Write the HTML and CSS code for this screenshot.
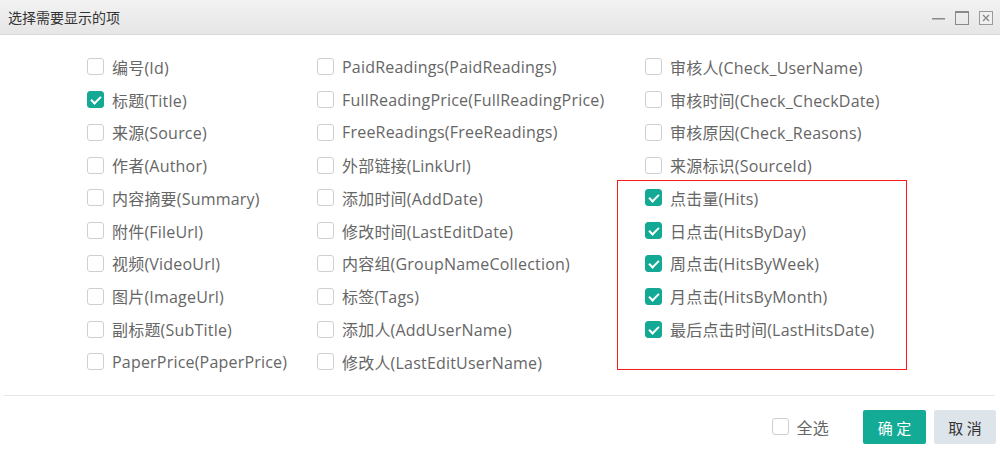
FILE: index.html
```html
<!DOCTYPE html>
<html lang="zh">
<head>
<meta charset="utf-8">
<link rel="stylesheet" href="styles.css">
</head>
<body>
<div class="dialog">
  <div class="titlebar">
    <span class="title">选择需要显示的项</span>
    <div class="tools">
      <svg class="tool" width="14" height="16" viewBox="0 0 14 16"><rect x="0" y="8" width="13" height="1.5" fill="#8a8a8a"/></svg>
      <svg class="tool" width="15" height="16" viewBox="0 0 15 16"><rect x="0.5" y="1.5" width="13" height="13" fill="none" stroke="#8a8a8a" stroke-width="1"/><rect x="0.5" y="1" width="13" height="2" fill="#8a8a8a"/></svg>
      <svg class="tool" width="15" height="16" viewBox="0 0 15 16"><rect x="0.5" y="1.5" width="13" height="13" fill="#f0f0f0" stroke="#9a9a9a" stroke-width="1"/><path d="M4 5 L10 11 M10 5 L4 11" stroke="#8a8a8a" stroke-width="1.4"/></svg>
    </div>
  </div>
  <div class="body">
    <div class="grid">
      <div class="col c1">
        <label class="item"><span class="box"></span>编号(Id)</label>
        <label class="item"><span class="box on"></span>标题(Title)</label>
        <label class="item"><span class="box"></span>来源(Source)</label>
        <label class="item"><span class="box"></span>作者(Author)</label>
        <label class="item"><span class="box"></span>内容摘要(Summary)</label>
        <label class="item"><span class="box"></span>附件(FileUrl)</label>
        <label class="item"><span class="box"></span>视频(VideoUrl)</label>
        <label class="item"><span class="box"></span>图片(ImageUrl)</label>
        <label class="item"><span class="box"></span>副标题(SubTitle)</label>
        <label class="item"><span class="box"></span>PaperPrice(PaperPrice)</label>
      </div>
      <div class="col c2">
        <label class="item"><span class="box"></span>PaidReadings(PaidReadings)</label>
        <label class="item"><span class="box"></span>FullReadingPrice(FullReadingPrice)</label>
        <label class="item"><span class="box"></span>FreeReadings(FreeReadings)</label>
        <label class="item"><span class="box"></span>外部链接(LinkUrl)</label>
        <label class="item"><span class="box"></span>添加时间(AddDate)</label>
        <label class="item"><span class="box"></span>修改时间(LastEditDate)</label>
        <label class="item"><span class="box"></span>内容组(GroupNameCollection)</label>
        <label class="item"><span class="box"></span>标签(Tags)</label>
        <label class="item"><span class="box"></span>添加人(AddUserName)</label>
        <label class="item"><span class="box"></span>修改人(LastEditUserName)</label>
      </div>
      <div class="col c3">
        <label class="item"><span class="box"></span>审核人(Check_UserName)</label>
        <label class="item"><span class="box"></span>审核时间(Check_CheckDate)</label>
        <label class="item"><span class="box"></span>审核原因(Check_Reasons)</label>
        <label class="item"><span class="box"></span>来源标识(SourceId)</label>
        <label class="item"><span class="box on"></span>点击量(Hits)</label>
        <label class="item"><span class="box on"></span>日点击(HitsByDay)</label>
        <label class="item"><span class="box on"></span>周点击(HitsByWeek)</label>
        <label class="item"><span class="box on"></span>月点击(HitsByMonth)</label>
        <label class="item"><span class="box on"></span>最后点击时间(LastHitsDate)</label>
        <div class="highlight"></div>
      </div>
    </div>
  </div>
  <div class="footer">
    <label class="item all"><span class="box"></span>全选</label>
    <button class="btn ok">确 定</button>
    <button class="btn cancel">取 消</button>
  </div>
</div>
</body>
</html>
```

FILE: styles.css
```css
* { box-sizing: border-box; }
html, body { margin: 0; padding: 0; background: #fff; }
body {
  width: 1000px;
  height: 459px;
  overflow: hidden;
  font-family: "Open Sans", "Noto Sans CJK SC", sans-serif;
  color: #666;
}
.titlebar {
  height: 35px;
  background: linear-gradient(#f2f2f2, #e6e6e6);
  border-bottom: 1px solid #d9d9d9;
  display: flex;
  align-items: center;
  justify-content: space-between;
  padding: 0 6px 0 8px;
}
.title {
  font-family: "Noto Sans CJK SC", sans-serif;
  font-size: 14px;
  color: #333;
}
.tools { display: flex; gap: 9px; align-items: center; padding-top: 1px; }
.tool { display: block; }
.body {
  padding: 15.5px 0 0 83px;
  height: 361px;
  border-bottom: 1px solid #e6e6e6;
  margin: 0 5px 0 4px;
}
.grid { display: grid; grid-template-columns: 230px 328px 1fr; }
.col { display: flex; flex-direction: column; position: relative; }
.item {
  height: 32.78px;
  display: flex;
  align-items: center;
  font-size: 16px;
  letter-spacing: 0.2px;
  color: #666;
  white-space: nowrap;
}
.box {
  width: 17px;
  height: 17px;
  border: 1px solid #cfcfcf;
  border-radius: 3px;
  margin-right: 8px;
  flex: none;
  background: #fff;
  position: relative;
}
.box.on {
  background: #14a994;
  border-color: #14a994;
}
.box.on::after {
  content: "";
  position: absolute;
  left: 5px;
  top: 2px;
  width: 4px;
  height: 8px;
  border: solid #fff;
  border-width: 0 2px 2px 0;
  transform: rotate(45deg);
}
.highlight {
  position: absolute;
  left: -28px;
  top: 129.5px;
  width: 290px;
  height: 190px;
  border: 1px solid #ff1a1a;
  pointer-events: none;
}
.footer {
  display: flex;
  justify-content: flex-end;
  align-items: center;
  padding: 14px 4px 0 0;
}
.all { margin-right: 34px; }
.btn {
  height: 34px;
  border: none;
  border-radius: 2px;
  font-family: "Noto Sans CJK SC", sans-serif;
  font-size: 15px;
  padding: 0;
}
.ok { width: 63px; background: #13ab96; color: #fff; margin-right: 8px; }
.cancel { width: 62px; background: #dde4ea; color: #333; }
```
